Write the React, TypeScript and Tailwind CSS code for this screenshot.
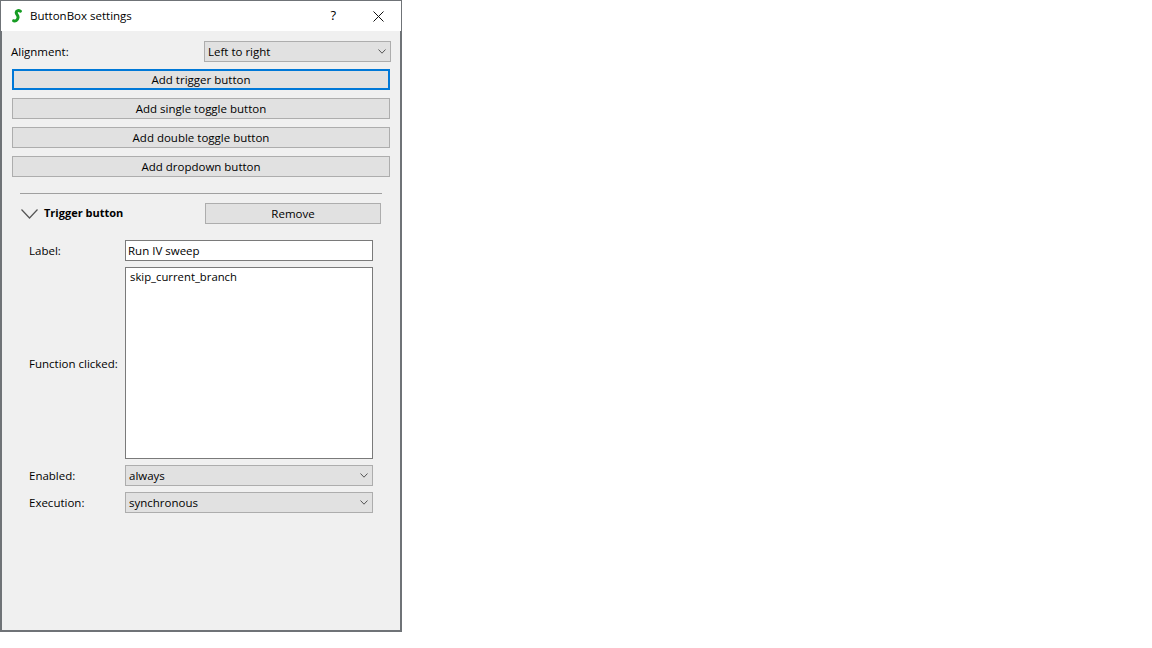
import React from "react";

const font = "font-['Open_Sans','Noto_Sans',sans-serif]";

const Chevron = () => (
  <svg width="8" height="5" viewBox="0 0 8 5" fill="none" stroke="#555" strokeWidth="1">
    <path d="M0.5 0.5 L4 4.2 L7.5 0.5" />
  </svg>
);

const Logo = () => (
  <svg width="10" height="14" viewBox="0 0 10 14" fill="none" stroke="#169c23" strokeWidth="3" strokeLinecap="round">
    <path d="M8.4 2.2 C6.8 1.2 4.4 1.4 4.2 3.4 C4 5.4 6.6 6 6 8.8 C5.6 11.4 3.4 12.2 1.6 11.8" />
  </svg>
);

const ActionButton = ({ label, focused }: { label: string; focused?: boolean }) => (
  <button
    className={
      focused
        ? "h-[21px] w-full bg-[#e1e1e1] border-2 border-[#0078d7] flex items-center justify-center text-black"
        : "h-[21px] w-full bg-[#e1e1e1] border border-[#adadad] flex items-center justify-center text-black"
    }
  >
    {label}
  </button>
);

const Select = ({ value, className }: { value: string; className: string }) => (
  <div className={"h-[21px] bg-[#e1e1e1] border border-[#adadad] flex items-center justify-between pl-[3px] pr-[4px] " + className}>
    <span>{value}</span>
    <Chevron />
  </div>
);

const App = () => {
  return (
    <div className={"w-[1152px] h-[648px] bg-white text-[11.5px] text-black " + font}>
      <div className="w-[402px] h-[632px] flex flex-col border border-[#6f7377]">
        <div className="h-[30px] shrink-0 bg-white flex items-center justify-between pl-[11px] pr-[17px]">
          <div className="flex items-center gap-[8px]">
            <Logo />
            <span>ButtonBox settings</span>
          </div>
          <div className="flex items-center gap-[37px]">
            <span className="text-[13px]">?</span>
            <svg width="11" height="11" viewBox="0 0 11 11" stroke="#111" strokeWidth="1">
              <path d="M0.5 0.5 L10.5 10.5 M10.5 0.5 L0.5 10.5" />
            </svg>
          </div>
        </div>
        <div className="flex-1 bg-[#f0f0f0] border-x border-b border-[#6f7377] pt-[10px] pl-[9px] pr-[9px]">
          <div className="flex items-center justify-between h-[21px]">
            <span>Alignment:</span>
            <Select value="Left to right" className="w-[187px]" />
          </div>
          <div className="flex flex-col gap-[8px] mt-[7px] px-[1px]">
            <ActionButton label="Add trigger button" focused />
            <ActionButton label="Add single toggle button" />
            <ActionButton label="Add double toggle button" />
            <ActionButton label="Add dropdown button" />
          </div>
          <div className="mx-[9px] mt-[16px] h-px bg-[#a0a0a0]" />
          <div className="flex items-center justify-between h-[21px] mt-[9px] pl-[10px] pr-[10px]">
            <div className="flex items-center gap-[6px]">
              <svg width="17" height="10" viewBox="0 0 17 10" fill="none" stroke="#555" strokeWidth="1.2">
                <path d="M0.5 0.5 L8.5 9 L16.5 0.5" />
              </svg>
              <span className="font-bold text-[11px]">Trigger button</span>
            </div>
            <button className="w-[176px] h-[21px] bg-[#e1e1e1] border border-[#adadad] flex items-center justify-center">Remove</button>
          </div>
          <div className="mt-[16px] pl-[18px] pr-[18px] grid grid-cols-[96px_1fr] gap-y-[6px] items-center">
            <span>Label:</span>
            <div className="h-[21px] bg-white border border-[#7a7a7a] flex items-center pl-[2px]">Run IV sweep</div>
            <span className="pt-[2px]">Function clicked:</span>
            <div className="h-[192px] bg-white border border-[#7a7a7a] pl-[4px] pt-[1px] text-[11.3px]">skip_current_branch</div>
            <span>Enabled:</span>
            <Select value="always" className="" />
            <span>Execution:</span>
            <Select value="synchronous" className="" />
          </div>
        </div>
      </div>
    </div>
  );
};

export default App;
